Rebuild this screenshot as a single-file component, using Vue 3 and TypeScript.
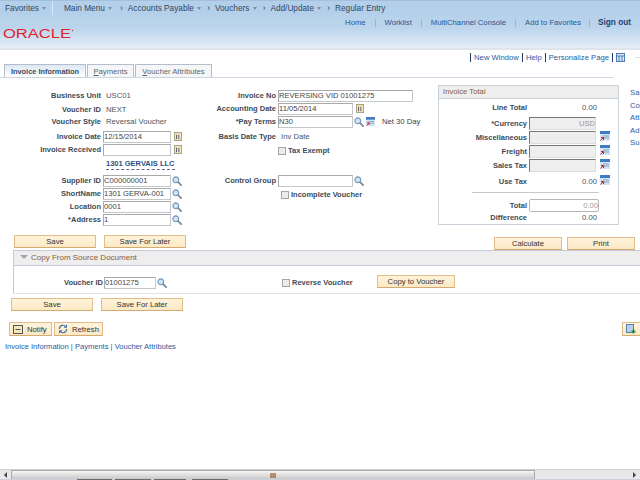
<template>
  <div class="page">
    <svg class="defs" width="0" height="0">
      <symbol id="lookup" viewBox="0 0 11 11">
        <circle cx="4.2" cy="4.2" r="3.2" fill="#cfe3f5" stroke="#6f94b8" stroke-width="1.2" />
        <path d="M6.8 6.8 10 10" stroke="#7d8b99" stroke-width="2" stroke-linecap="round" />
      </symbol>
      <symbol id="calendar" viewBox="0 0 9 10">
        <rect x="0.5" y="0.5" width="8" height="9" fill="#f2e3b0" stroke="#a09a7c" />
        <rect x="2" y="3" width="5" height="5" fill="#fff" />
        <path d="M3 3v5M5.5 3v5" stroke="#444" stroke-width="1.1" />
      </symbol>
      <symbol id="detail" viewBox="0 0 10 10">
        <rect x="0" y="0" width="10" height="10" fill="#d5e4f3" />
        <rect x="0" y="0" width="10" height="3" fill="#3f7cc4" />
        <path d="M3 5h6M4 7h5" stroke="#7fa3c8" />
        <path d="M0.5 9.5 3.5 6.5M1 6.5h2.5V9" stroke="#d02020" fill="none" />
      </symbol>
    </svg>

    <nav class="nav">
      <span class="nav-fav">Favorites <i class="caret"></i></span>
      <span class="nav-item first">Main Menu <i class="caret"></i></span>
      <span class="nav-item" v-for="c in crumbs" :key="c"><b class="chev">›</b>{{ c }} <i class="caret" v-if="c !== 'Regular Entry'"></i></span>
    </nav>

    <header class="head">
      <svg class="logo" width="72" height="12" viewBox="0 0 72 12">
        <text x="0" y="10" textLength="68" lengthAdjust="spacingAndGlyphs" font-size="12.5" fill="#e3212b" font-family="Liberation Sans, sans-serif">ORACLE</text>
        <circle cx="69.500" cy="2.500" r="0.700" fill="#e3212b" />
      </svg>
      <div class="head-links">
        <a>Home</a><i></i><a>Worklist</a><i></i><a>MultiChannel Console</a><i></i><a>Add to Favorites</a><i class="last-sep"></i><a class="signout">Sign out</a>
      </div>
    </header>

    <div class="toolbar">
      <a>New Window</a><a>Help</a><a>Personalize Page</a>
      <svg class="tb-icon" width="9" height="9" viewBox="0 0 9 9">
        <rect x="0.5" y="0.5" width="8" height="8" fill="#dce8f4" stroke="#4a7db8" />
        <path d="M1 3h7M3 3v5M6 3v5" stroke="#4a7db8" />
      </svg>
      <span class="tb-mark"></span>
    </div>

    <div class="tabs">
      <span class="tab active">Invoice Information</span>
      <span class="tab pay"><u>P</u>ayments</span>
      <span class="tab attr"><u>V</u>oucher Attributes</span>
    </div>

    <section class="form">
      <div class="col left">
        <template v-for="r in leftRows" :key="r.label">
          <label class="lbl">{{ r.label }}</label>
          <div class="cell">
            <span v-if="r.text" class="val" :class="{ supplier: r.supplier }">{{ r.text }}</span>
            <template v-else-if="r.input !== undefined">
              <input class="inp w68" :value="r.input" readonly />
              <svg v-if="r.icon === 'calendar'" class="ic-cal"><use href="#calendar" /></svg>
              <svg v-else class="ic-look"><use href="#lookup" /></svg>
            </template>
          </div>
        </template>
      </div>

      <div class="col middle">
        <label class="lbl">Invoice No</label>
        <div class="cell"><input class="inp w135" value="REVERSING VID 01001275" readonly /></div>
        <label class="lbl">Accounting Date</label>
        <div class="cell"><input class="inp w75" value="11/05/2014" readonly /><svg class="ic-cal"><use href="#calendar" /></svg></div>
        <label class="lbl">*Pay Terms</label>
        <div class="cell">
          <input class="inp w75" value="N30" readonly />
          <svg class="ic-look"><use href="#lookup" /></svg>
          <svg class="ic-det"><use href="#detail" /></svg>
          <span class="val net">Net 30 Day</span>
        </div>
        <label class="lbl">Basis Date Type</label>
        <div class="cell"><span class="val basis">Inv Date</span></div>
        <label class="lbl"></label>
        <div class="cell"><i class="chk"></i><span class="lbl-inline">Tax Exempt</span></div>
        <label class="lbl">Control Group</label>
        <div class="cell"><input class="inp w75" readonly /><svg class="ic-look"><use href="#lookup" /></svg></div>
        <label class="lbl"></label>
        <div class="cell incomplete"><i class="chk"></i><span class="lbl-inline">Incomplete Voucher</span></div>
      </div>

      <div class="total-box">
        <div class="total-title">Invoice Total</div>
        <div class="total-grid">
          <template v-for="t in totals" :key="t.label">
            <label class="lbl">{{ t.label }}</label>
            <div class="cell">
              <span v-if="t.amount" class="amount">{{ t.amount }}</span>
              <input v-else class="inp dis" :value="t.field" readonly />
              <svg v-if="t.detail" class="ic-det side"><use href="#detail" /></svg>
            </div>
          </template>
          <hr class="total-hr" />
          <label class="lbl">Total</label>
          <div class="cell"><input class="inp sum" value="0.00" readonly /></div>
          <label class="lbl">Difference</label>
          <div class="cell"><span class="amount">0.00</span></div>
        </div>
      </div>

      <div class="side-links">
        <a v-for="s in sideLinks" :key="s">{{ s }}</a>
      </div>
    </section>

    <div class="btn-row top-btns">
      <button class="btn w82">Save</button>
      <button class="btn w82">Save For Later</button>
      <span class="spacer"></span>
      <button class="btn w68b">Calculate</button>
      <button class="btn w68b">Print</button>
    </div>

    <section class="group">
      <div class="group-head"><i class="tri"></i>Copy From Source Document</div>
      <div class="group-body">
        <label class="lbl g-lbl">Voucher ID</label>
        <input class="inp g-inp" value="01001275" readonly />
        <svg class="ic-look"><use href="#lookup" /></svg>
        <i class="chk g-chk"></i>
        <span class="lbl-inline g-rev">Reverse Voucher</span>
        <button class="btn g-btn">Copy to Voucher</button>
      </div>
    </section>

    <div class="btn-row low-btns">
      <button class="btn w82">Save</button>
      <button class="btn w82">Save For Later</button>
    </div>

    <div class="action-row">
      <button class="btn act notify">
        <svg width="10" height="9" viewBox="0 0 10 9">
          <rect x="0.5" y="0.5" width="9" height="8" fill="#f6e7b8" stroke="#555" />
          <path d="M2.5 4.5h5" stroke="#555" />
        </svg>
        Notify
      </button>
      <button class="btn act refresh">
        <svg width="10" height="10" viewBox="0 0 10 10" fill="none" stroke="#3f6fb0" stroke-width="1.2">
          <path d="M1.5 5A3.5 3.5 0 0 1 8 3M8.500 5A3.500 3.500 0 0 1 2 7" />
          <path d="M8.500 .8V3.300H6M1.500 9.200V6.700H4" stroke-width="1" />
        </svg>
        Refresh
      </button>
      <span class="spacer"></span>
      <button class="btn act add">
        <svg width="10" height="10" viewBox="0 0 10 10">
          <rect x="0.5" y="0.5" width="7" height="8" fill="#b9d0ea" stroke="#5580b5" />
          <path d="M7.500 5.500v4M5.500 7.500h4" stroke="#1c8a2e" stroke-width="1.500" />
        </svg>
        Add
      </button>
    </div>

    <div class="foot-links">
      <a>Invoice Information</a> | <a>Payments</a> | <a>Voucher Attributes</a>
    </div>

    <div class="scrollbar">
      <span class="sb-arrow left-arrow"></span>
      <span class="sb-thumb"><b>III</b></span>
      <span class="sb-track"></span>
      <span class="sb-arrow right-arrow"></span>
    </div>
    <div class="task-strip"></div>
  </div>
</template>

<script setup lang="ts">
interface LeftRow {
  label: string
  text?: string
  input?: string
  icon?: 'calendar' | 'lookup'
  supplier?: boolean
}

interface TotalRow {
  label: string
  amount?: string
  field?: string
  detail?: boolean
}

const crumbs: string[] = ['Accounts Payable', 'Vouchers', 'Add/Update', 'Regular Entry']

const leftRows: LeftRow[] = [
  { label: 'Business Unit', text: 'USC01' },
  { label: 'Voucher ID', text: 'NEXT' },
  { label: 'Voucher Style', text: 'Reversal Voucher' },
  { label: 'Invoice Date', input: '12/15/2014', icon: 'calendar' },
  { label: 'Invoice Received', input: '', icon: 'calendar' },
  { label: '', text: '1301 GERVAIS LLC', supplier: true },
  { label: 'Supplier ID', input: 'C000000001', icon: 'lookup' },
  { label: 'ShortName', input: '1301 GERVA-001', icon: 'lookup' },
  { label: 'Location', input: '0001', icon: 'lookup' },
  { label: '*Address', input: '1', icon: 'lookup' }
]

const totals: TotalRow[] = [
  { label: 'Line Total', amount: '0.00' },
  { label: '*Currency', field: 'USD' },
  { label: 'Miscellaneous', field: '', detail: true },
  { label: 'Freight', field: '', detail: true },
  { label: 'Sales Tax', field: '', detail: true },
  { label: 'Use Tax', amount: '0.00', detail: true }
]

const sideLinks: string[] = ['Sa', 'Co', 'Atta', 'Ad', 'Su']
</script>

<style>
html,
body {
  margin: 0;
  background: #fff;
}
</style>

<style scoped>
.page {
  width: 640px;
  height: 480px;
  overflow: hidden;
  display: flex;
  flex-direction: column;
  font-family: "Liberation Sans", Arial, sans-serif;
  font-size: 7.7px;
  color: #3a4652;
  background: #fff;
  position: relative;
}

.defs {
  position: absolute;
}

a {
  color: #2b5b9e;
}

/* top navigation */
.nav {
  height: 15px;
  flex: none;
  display: flex;
  align-items: center;
  font-size: 8.25px;
  color: #33475c;
  background: #b4cfe9;
  border-top: 1px solid #a4c0dc;
  box-sizing: border-box;
  white-space: nowrap;
}

.nav-fav {
  width: 47px;
  padding-left: 5px;
  border-right: 1px solid #dbe7f3;
  height: 15px;
  line-height: 15px;
}

.nav-item {
  margin-left: 6px;
}

.nav-item.first {
  margin: 0 2px 0 11px;
}

.chev {
  font-weight: normal;
  margin-right: 5px;
}

.caret {
  display: inline-block;
  border: 2.5px solid transparent;
  border-top: 3px solid #7f8fa3;
  border-bottom: 0;
  vertical-align: 1px;
  margin-left: 1px;
}

.head {
  height: 35px;
  flex: none;
  box-sizing: border-box;
  background: linear-gradient(#b6d1ea, #bcd5ec 40%, #e3edf7);
  border-bottom: 2px solid #dfe3ea;
  display: flex;
  justify-content: space-between;
  align-items: flex-start;
}

.logo {
  margin: 13px 0 0 3px;
}

.head-links {
  display: flex;
  align-items: center;
  margin: 2px 9px 0 0;
  height: 11px;
}

.head-links a {
  color: #2a5590;
}

.head-links i {
  width: 1px;
  height: 8px;
  background: #9db8d2;
  margin: 0 9px;
}

.head-links .last-sep {
  margin: 0 8px;
}

.head-links .signout {
  font-weight: bold;
  font-size: 8.25px;
  color: #1d3f72;
}

.toolbar {
  height: 13px;
  flex: none;
  box-sizing: border-box;
  padding-top: 2px;
  display: flex;
  justify-content: flex-end;
  align-items: center;
}

.toolbar a {
  border-left: 1px solid #223a66;
  padding: 0 3px;
  line-height: 9px;
}

.tb-icon {
  border-left: 1px solid #223a66;
  padding-left: 3px;
}

.tb-mark {
  width: 5px;
  height: 1px;
  margin-left: 10px;
  background: #dedede;
}

.tabs {
  height: 15px;
  flex: none;
  width: 613px;
  box-sizing: border-box;
  display: flex;
  align-items: flex-end;
  gap: 1px;
  padding-left: 4px;
  border-bottom: 1px solid #ccd5e0;
}

.tab {
  box-sizing: border-box;
  height: 13px;
  line-height: 13px;
  text-align: center;
  white-space: nowrap;
  border: 1px solid #b5bccb;
  border-bottom: 0;
  background: #f5f6f8;
  color: #5a6672;
}

.tab.active {
  width: 82px;
  font-weight: bold;
  font-size: 7.4px;
  color: #3a4e66;
  background: linear-gradient(#dce8f4, #fff);
}

.tab.pay {
  width: 47px;
}

.tab.attr {
  width: 77px;
}

/* main form */
.form {
  height: 157px;
  flex: none;
  display: flex;
  align-items: flex-start;
  padding-top: 8px;
  box-sizing: border-box;
  white-space: nowrap;
}

.col {
  display: grid;
}

.left {
  width: 187px;
  padding-top: 3px;
  grid-template-columns: 101px 1fr;
  grid-template-rows: 14px 12px 15px 13px 15px 16px 13px 13px 13px 13px;
}

.middle {
  width: 251px;
  padding-top: 3px;
  grid-template-columns: 89px 1fr;
  grid-template-rows: 13px 13px 15px 14px 30px 14px 13px;
}

.lbl {
  font-weight: bold;
  font-size: 7.5px;
  text-align: right;
  line-height: 13px;
  height: 13px;
  color: #3d4a58;
}

.cell {
  display: flex;
  align-items: center;
  height: 13px;
  padding-left: 2px;
}

.val {
  color: #4a5561;
  margin-left: 3px;
}

.val.supplier {
  font-weight: bold;
  font-size: 7.5px;
  color: #2c4f88;
  border-bottom: 1px dashed #5a6a80;
  line-height: 10px;
}

.val.net {
  margin-left: 7px;
  color: #3a4652;
}

.val.basis {
  margin-left: 3px;
}

.inp {
  box-sizing: border-box;
  height: 12px;
  padding: 0;
  margin: 0;
  font: inherit;
  font-size: 7.6px;
  color: #444;
  background: #fff;
  border: 1px solid #c4c7ca;
  border-top-color: #aaa;
  border-left-color: #aaa;
  outline: none;
}

.w68 {
  width: 68px;
}

.w75 {
  width: 75px;
}

.w135 {
  width: 135px;
}

.ic-look {
  width: 10px;
  height: 10px;
  margin-left: 1px;
  flex: none;
}

.ic-cal {
  width: 8px;
  height: 9px;
  margin-left: 3px;
  flex: none;
}

.ic-det {
  width: 9px;
  height: 9px;
  margin-left: 2px;
  flex: none;
}

.chk {
  display: inline-block;
  box-sizing: border-box;
  width: 8px;
  height: 8px;
  border: 1px solid #a5a5a5;
  background: #ececec;
  flex: none;
}

.lbl-inline {
  font-weight: bold;
  font-size: 7.5px;
  margin-left: 2px;
  color: #3d4a58;
}

.incomplete {
  padding-left: 5px;
}

/* invoice total */
.total-box {
  width: 181px;
  height: 140px;
  margin-top: -1px;
  box-sizing: border-box;
  border: 1px solid #c9d2da;
  flex: none;
}

.total-title {
  height: 12px;
  line-height: 12px;
  padding-left: 4px;
  background: #eeeeee;
  border-bottom: 1px solid #c9d2da;
  color: #8a5a3a;
}

.total-grid {
  display: grid;
  grid-template-columns: 88px 1fr;
  grid-template-rows: 16px 14px 14px 14px 16px 15px 9px 12px 13px;
  padding-top: 2px;
}

.total-grid .cell {
  padding: 0 8px 0 2px;
}

.total-grid .inp.dis {
  width: 67px;
  height: 13px;
  text-align: right;
  color: #999;
  background: #eeeeee;
  border: 1px solid #ddd;
  border-top: 1px solid #777;
  border-left: 1px solid #777;
}

.amount {
  width: 69px;
  text-align: right;
  color: #4a5561;
  padding-right: 1px;
  box-sizing: border-box;
}

.ic-det.side {
  width: 10px;
  height: 10px;
  margin-left: auto;
  margin-top: -3px;
}

.total-hr {
  grid-column: 1 / 3;
  width: 127px;
  margin: 2px 0 0 33px;
  height: 1px;
  border: 0;
  background: #c5c9cc;
}

.inp.sum {
  width: 70px;
  height: 13px;
  text-align: right;
  color: #999;
  border: 1px solid #b5b8bb;
  border-radius: 2px;
}

.side-links {
  width: 10px;
  margin: 1px 0 0 11px;
  display: flex;
  flex-direction: column;
  overflow: hidden;
  line-height: 12.500px;
  flex: none;
}

/* buttons */
.btn {
  box-sizing: border-box;
  height: 13px;
  padding: 0;
  font: inherit;
  color: #333;
  border: 1px solid #e0bd8c;
  border-bottom-color: #d4aa70;
  background: linear-gradient(#fff3d9, #fbe9c6);
  white-space: nowrap;
}

.btn-row {
  display: flex;
  flex: none;
}

.w82 {
  width: 82px;
}

.w68b {
  width: 68px;
}

.top-btns {
  height: 15px;
  padding: 0 5px 0 14px;
  gap: 8px;
}

.top-btns .w68b {
  margin-top: 2px;
  margin-left: -3px;
}

.spacer {
  flex: 1;
}

.group {
  flex: none;
  height: 44px;
  margin-left: 13px;
  box-sizing: border-box;
  border-top: 1px solid #c5cad6;
  border-left: 1px solid #c5cad6;
  border-bottom: 1px solid #dfe4e6;
}

.group-head {
  height: 14px;
  line-height: 14px;
  font-size: 8px;
  background: #eeeeee;
  border-bottom: 1px solid #c5cad6;
  color: #8a5a3a;
  display: flex;
  align-items: center;
  padding-left: 6px;
}

.tri {
  border: 4px solid transparent;
  border-top: 4px solid #a5a5a5;
  border-bottom: 0;
  margin: -2px 3px 0 0;
}

.group-body {
  display: flex;
  align-items: center;
  height: 26px;
  padding-top: 7px;
  box-sizing: border-box;
}

.g-lbl {
  width: 89px;
}

.g-inp {
  width: 52px;
  margin-left: 1px;
}

.g-chk {
  margin-left: 115px;
}

.g-rev {
  width: 85px;
}

.g-btn {
  width: 78px;
  margin-top: -2px;
}

.low-btns {
  height: 14px;
  margin-top: 4px;
  padding-left: 11px;
  gap: 8px;
}

.action-row {
  width: 666px;
  flex: none;
  display: flex;
  gap: 2px;
  margin-top: 10px;
  height: 14px;
  padding-left: 9px;
  box-sizing: border-box;
}

.act {
  height: 14px;
  display: flex;
  align-items: center;
  gap: 4px;
  padding-left: 3px;
  font: inherit;
}

.notify {
  width: 43px;
}

.refresh {
  width: 49px;
}

.add {
  width: 44px;
}

.foot-links {
  flex: none;
  margin-top: 5px;
  padding-left: 5px;
  line-height: 12px;
  font-size: 7.55px;
  color: #2b5b9e;
}

/* browser scrollbar */
.scrollbar {
  margin-top: auto;
  height: 10px;
  flex: none;
  display: flex;
  align-items: stretch;
  background: #e8e8e8;
  border-top: 1px solid #cfcfcf;
  box-sizing: border-box;
}

.sb-arrow {
  width: 11px;
  flex: none;
  display: flex;
  align-items: center;
  justify-content: center;
}

.sb-arrow::before {
  content: "";
  border: 3px solid transparent;
}

.left-arrow::before {
  border-right-color: #444;
  border-left: 0;
}

.right-arrow::before {
  border-left-color: #444;
  border-right: 0;
}

.sb-thumb {
  width: 524px;
  flex: none;
  text-align: center;
  font-size: 7px;
  line-height: 9px;
  color: #555;
  box-sizing: border-box;
  border: 1px solid #aaa;
  border-bottom: 0;
  background: linear-gradient(#f6f6f6, #c9c9c9);
}

.sb-track {
  flex: 1;
}

.task-strip {
  height: 1px;
  flex: none;
  background: linear-gradient(90deg, #c9d2dc 77px, #6b6b6b 77px 112px, #c9d2dc 112px 115px, #6b6b6b 115px 151px, #c9d2dc 151px 154px, #6b6b6b 154px 186px, #c9d2dc 186px 192px, #6b6b6b 192px 228px, #c9d2dc 228px);
}
</style>
